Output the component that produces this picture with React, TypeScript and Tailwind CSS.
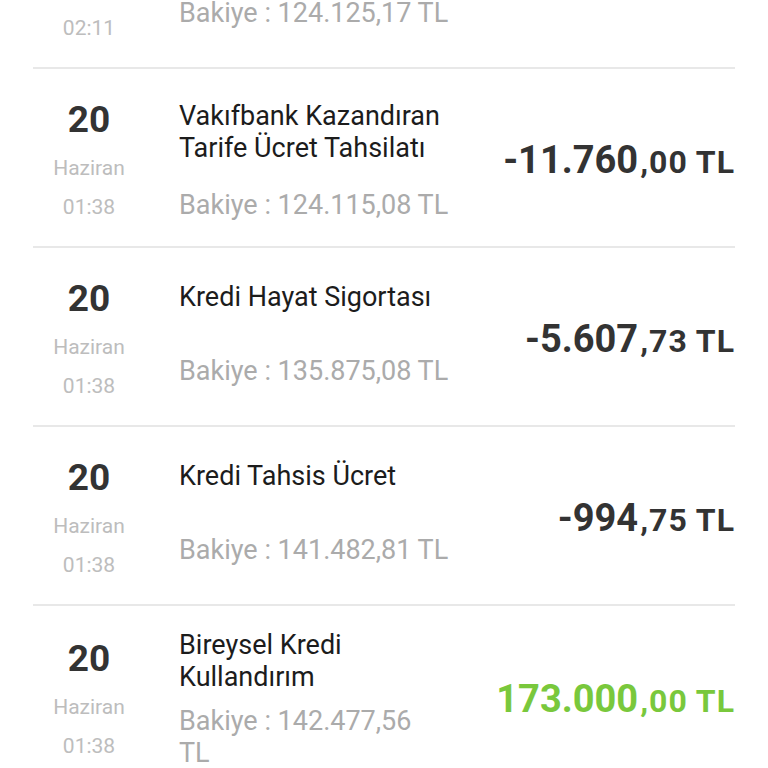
import React from 'react';

type Tx = {
    day: string;
    month: string;
    time: string;
    title: string;
    balance: string;
    main: string;
    cents: string;
    positive?: boolean;
    mid: string;
    row?: string;
};

const txs: Tx[] = [
    { day: '20', month: 'Haziran', time: '02:11', title: 'Para Yatırma', balance: 'Bakiye : 124.125,17 TL', main: '10', cents: ',09 TL', positive: true, mid: 'gap-[42px] mb-[10px]' },
    { day: '20', month: 'Haziran', time: '01:38', title: 'Vakıfbank Kazandıran Tarife Ücret Tahsilatı', balance: 'Bakiye : 124.115,08 TL', main: '-11.760', cents: ',00 TL', mid: 'gap-[25px]' },
    { day: '20', month: 'Haziran', time: '01:38', title: 'Kredi Hayat Sigortası', balance: 'Bakiye : 135.875,08 TL', main: '-5.607', cents: ',73 TL', mid: 'gap-[42px] mb-[10px]' },
    { day: '20', month: 'Haziran', time: '01:38', title: 'Kredi Tahsis Ücret', balance: 'Bakiye : 141.482,81 TL', main: '-994', cents: ',75 TL', mid: 'gap-[42px] mb-[10px]' },
    { day: '20', month: 'Haziran', time: '01:38', title: 'Bireysel Kredi Kullandırım', balance: 'Bakiye : 142.477,56 TL', main: '173.000', cents: ',00 TL', positive: true, mid: 'gap-[12px]', row: 'h-[183px]' },
];

function TxRow({ tx }: { tx: Tx }) {
    return (
        <div className={`flex items-center border-t-2 border-[#e8e8e8] pt-[5px] ${tx.row ?? 'h-[179px]'}`}>
            <div className="w-[112px] shrink-0 flex flex-col items-center">
                <span className="text-[37px] leading-[40px] font-bold text-[#333333]">{tx.day}</span>
                <span className="mt-[14px] text-[21px] leading-[28px] text-[#bdbdbd]">{tx.month}</span>
                <span className="mt-[11px] text-[21px] leading-[28px] text-[#bdbdbd]">{tx.time}</span>
            </div>
            <div className={`ml-[34px] flex-1 min-w-0 flex flex-col text-[27px] leading-[32px] ${tx.mid}`}>
                <p className="text-[#1c1c1c]">{tx.title}</p>
                <p className="text-[#ababab]">{tx.balance}</p>
            </div>
            <div className={`ml-[49px] shrink-0 font-bold whitespace-nowrap ${tx.positive ? 'text-[#79c83c]' : 'text-[#333333]'}`}>
                <span className="text-[38px]">{tx.main}</span>
                <span className="ml-[2px] text-[32px] tracking-[1px]">{tx.cents}</span>
            </div>
        </div>
    );
}

export default function App() {
    return (
        <main className="h-[768px] overflow-hidden bg-white font-['Roboto',sans-serif]">
            <div className="mx-[33px] mt-[-112px]">
                {txs.map((tx, i) => (
                    <TxRow key={i} tx={tx} />
                ))}
            </div>
        </main>
    );
}
